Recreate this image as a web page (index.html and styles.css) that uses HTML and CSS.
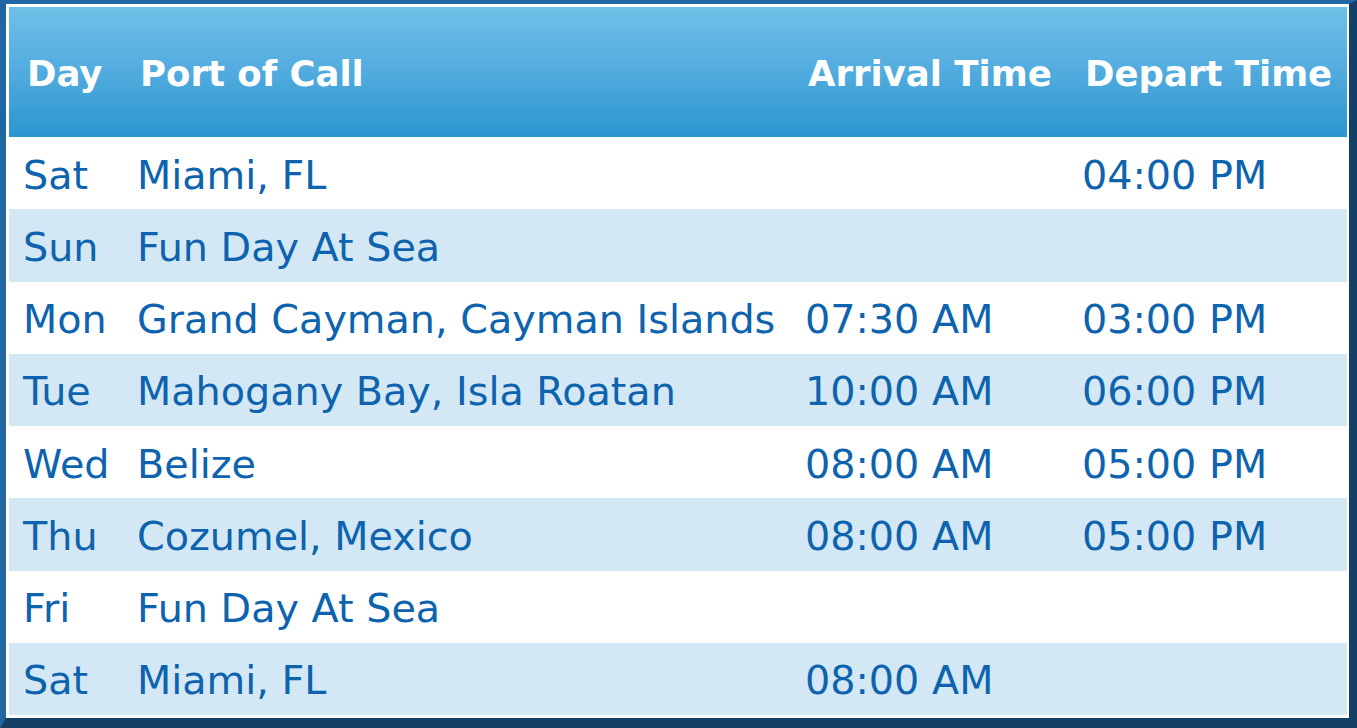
FILE: index.html
```html
<!DOCTYPE html>
<html>
<head>
<meta charset="utf-8">
<link rel="stylesheet" href="styles.css">
</head>
<body>
<div class="frame">
  <table class="itinerary">
    <colgroup>
      <col class="c-day"><col class="c-port"><col class="c-arr"><col class="c-dep">
    </colgroup>
    <thead>
      <tr><th>Day</th><th>Port of Call</th><th>Arrival Time</th><th>Depart Time</th></tr>
    </thead>
    <tbody>
      <tr><td>Sat</td><td>Miami, FL</td><td></td><td>04:00 PM</td></tr>
      <tr><td>Sun</td><td>Fun Day At Sea</td><td></td><td></td></tr>
      <tr><td>Mon</td><td>Grand Cayman, Cayman Islands</td><td>07:30 AM</td><td>03:00 PM</td></tr>
      <tr><td>Tue</td><td>Mahogany Bay, Isla Roatan</td><td>10:00 AM</td><td>06:00 PM</td></tr>
      <tr><td>Wed</td><td>Belize</td><td>08:00 AM</td><td>05:00 PM</td></tr>
      <tr><td>Thu</td><td>Cozumel, Mexico</td><td>08:00 AM</td><td>05:00 PM</td></tr>
      <tr><td>Fri</td><td>Fun Day At Sea</td><td></td><td></td></tr>
      <tr><td>Sat</td><td>Miami, FL</td><td>08:00 AM</td><td></td></tr>
    </tbody>
  </table>
</div>
</body>
</html>
```

FILE: styles.css
```css
html, body {
  margin: 0;
  padding: 0;
  background: #ffffff;
}
.frame {
  box-sizing: border-box;
  width: 1357px;
  height: 728px;
  border-style: solid;
  border-width: 4px 8px 10px 6px;
  border-top-color: #2067a4;
  border-left-color: #1f66a2;
  border-right-color: #143f67;
  border-bottom-color: #163f66;
  padding: 3px 2px 3px 3px;
  background: #ffffff;
}
.itinerary {
  width: 100%;
  border-collapse: collapse;
  table-layout: fixed;
  font-family: "DejaVu Sans", Verdana, sans-serif;
}
.c-day { width: 114px; }
.c-port { width: 668px; }
.c-arr { width: 277px; }
.c-dep { width: 279px; }
.itinerary thead tr {
  height: 130px;
  background: linear-gradient(to bottom, #6fc0e8 0%, #55ade0 45%, #2b95cf 100%);
}
.itinerary th {
  color: #ffffff;
  font-weight: bold;
  font-size: 35.5px;
  text-align: left;
  padding: 2px 0 0 17px;
  white-space: nowrap;
}
.itinerary th:first-child {
  padding-left: 18px;
}
.itinerary tbody tr {
  height: 72.25px;
}
.itinerary tbody tr:nth-child(even) {
  background: #d3e8f4;
}
.itinerary td {
  color: #0d63ad;
  font-size: 39.7px;
  padding: 3px 0 0 14px;
  white-space: nowrap;
  vertical-align: middle;
}
```
